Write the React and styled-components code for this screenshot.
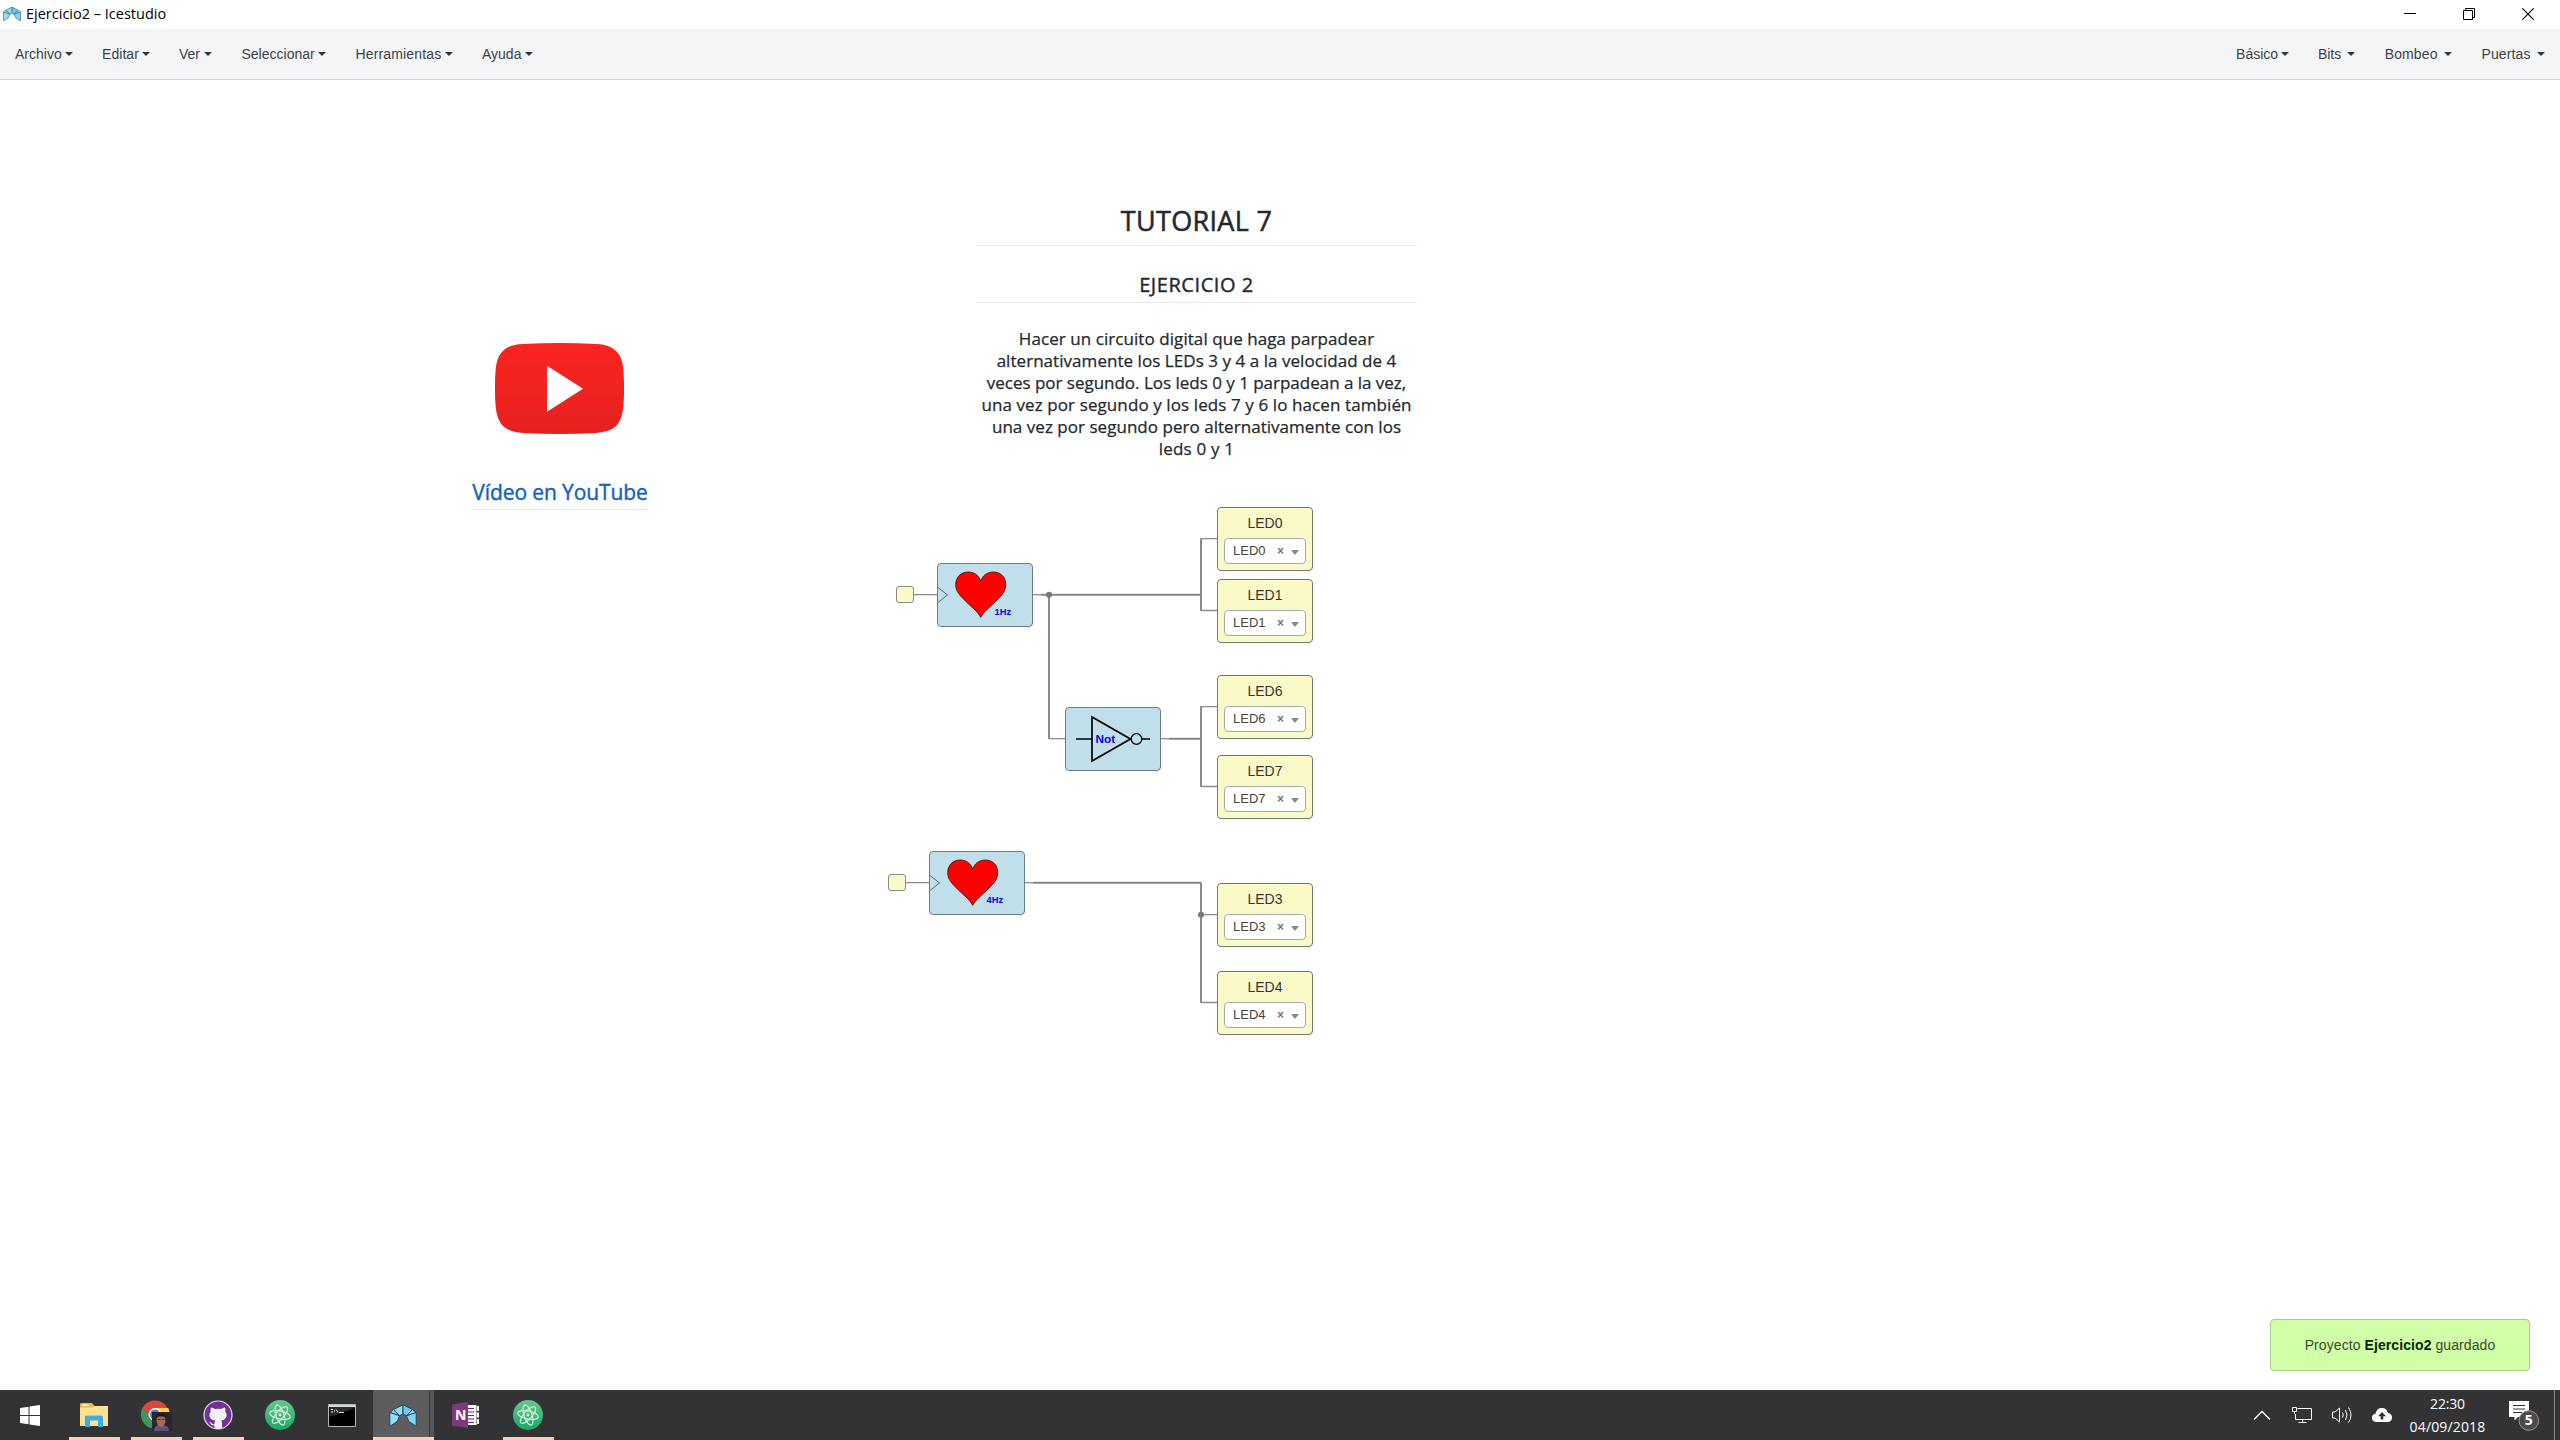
import React from 'react';
import styled, { createGlobalStyle, css } from 'styled-components';

const sans = '"Liberation Sans", Arial, sans-serif';
const humanist = '"Open Sans", "Noto Sans", sans-serif';

const GlobalStyle = createGlobalStyle`
  * { box-sizing: border-box; }
  body { margin: 0; background: #fff; font-family: ${sans}; }
  svg { display: block; }
`;

const Window = styled.div`
  display: flex;
  flex-direction: column;
  width: 2560px;
  height: 1440px;
  overflow: hidden;
  background: #fff;
`;

/* ---------- title bar ---------- */

const TitleBar = styled.header`
  display: flex;
  align-items: center;
  height: 29px;
  padding: 0 26px 1px 3px;
  background: #fff;
`;

const Title = styled.span`
  flex: 1;
  margin-left: 5px;
  font: 400 14.5px/20px ${humanist};
  letter-spacing: 0;
  color: #000;
`;

const WindowButtons = styled.div`
  display: flex;
  gap: 47px;
`;

/* ---------- menu bar ---------- */

const MenuBar = styled.nav`
  display: flex;
  justify-content: space-between;
  align-items: center;
  height: 51px;
  padding: 0 15px 1px 15px;
  background: #f3f5f7;
  border-bottom: 1px solid #d0d3d6;
`;

const MenuGroup = styled.div`
  display: flex;
  gap: ${p => p.$gap}px;
`;

const MenuItem = styled.a`
  display: flex;
  align-items: center;
  justify-content: space-between;
  width: ${p => p.$w}px;
  font-size: 14px;
  line-height: 20px;
  letter-spacing: ${p => p.$ls || 0}px;
  color: #3c4146;
  white-space: nowrap;
`;

const Caret = styled.i`
  flex: none;
  margin-top: 1px;
  border: 4px solid transparent;
  border-bottom-width: 0;
  border-top-color: ${p => p.$color || '#333'};
`;

/* ---------- design canvas ---------- */

const Canvas = styled.main`
  position: relative;
  flex: 1;
  background: #fff;
`;

const Wires = styled.svg`
  position: absolute;
  left: 0;
  top: 0;
`;

const Node = styled.div`
  position: absolute;
  left: ${p => p.$x}px;
  top: ${p => p.$y - 80}px;
`;

const Statement = styled(Node)`
  width: 441px;
  font-family: ${humanist};
  font-weight: 500;
  text-align: center;
  color: #24292e;
  -webkit-text-stroke: 0.25px #24292e;
`;

const heading = css`
  margin: 0;
  font-weight: 500;
  border-bottom: 1px solid #e6e8eb;
  -webkit-text-stroke: 0.55px #24292e;
`;

const H1 = styled.h1`
  ${heading}
  font-size: 27px;
  line-height: 34px;
  letter-spacing: 0.32px;
  padding-bottom: 7px;
`;

const H2 = styled.h2`
  ${heading}
  font-size: 20px;
  line-height: 26px;
  letter-spacing: 0.56px;
  margin-top: 26px;
  padding-bottom: 4px;
  -webkit-text-stroke-width: 0.4px;
`;

const Paragraph = styled.p`
  margin: 25px 0 0;
  font-size: 17px;
  line-height: 22px;
`;

const Line = styled.span`
  display: block;
  white-space: nowrap;
  letter-spacing: ${p => p.$ls}px;
`;

const VideoCard = styled(Node)`
  display: flex;
  flex-direction: column;
  align-items: center;
  width: 176px;
  gap: 44px;

  > svg { margin-right: 2px; }
`;

const VideoLink = styled.a`
  width: 100%;
  padding-bottom: 3px;
  border-bottom: 1px solid #dfe8f3;
  font: 500 21px/28px ${humanist};
  letter-spacing: -0.11px;
  text-align: center;
  white-space: nowrap;
  color: #1560c4;
  -webkit-text-stroke: 0.4px #1560c4;
`;

const Block = styled(Node)`
  width: 96px;
  height: 64px;
  border: 1px solid #6d7c84;
  border-radius: 4px;
  background: #c0dfeb;
`;

const ClockPin = styled(Node)`
  width: 18px;
  height: 17px;
  border: 1px solid #8c8b78;
  border-radius: 3px;
  background: #fafac8;
`;

const Output = styled(Node)`
  display: flex;
  flex-direction: column;
  align-items: center;
  width: 96px;
  height: 64px;
  padding-top: 7px;
  border: 1px solid #77766a;
  border-radius: 4px;
  background: #fafac8;
  font-size: 14px;
  line-height: 16px;
  color: #333;
`;

const Select = styled.div`
  display: flex;
  align-items: center;
  width: 82px;
  height: 26px;
  margin-top: 7px;
  padding: 0 6px 0 8px;
  border: 1px solid #aaa;
  border-radius: 4px;
  background: #fff;
  font-size: 13px;
  line-height: 24px;
  color: #444;
`;

const SelectValue = styled.span`
  flex: 1;
`;

const Clear = styled.span`
  margin-right: 7px;
  font-size: 12px;
  font-weight: 700;
  color: #777;
`;

const SelectCaret = styled(Caret)`
  margin-top: 3px;
  border-top-width: 5px;
`;

const Toast = styled.div`
  position: absolute;
  right: 30px;
  bottom: 19px;
  display: flex;
  align-items: center;
  justify-content: center;
  width: 260px;
  height: 52px;
  border: 1px solid #a8cf88;
  border-radius: 4px;
  background: #d1ffa8;
  font-size: 14px;
  letter-spacing: 0.08px;
  color: #3a4a2e;
  white-space: pre;
`;

const Strong = styled.b`
  color: #0c1f06;
`;

/* ---------- task bar ---------- */

const TaskBar = styled.footer`
  display: flex;
  height: 50px;
  background: #333335;
`;

const Start = styled.div`
  display: flex;
  align-items: center;
  justify-content: center;
  width: 60px;
  margin-right: 3px;
`;

const Task = styled.div`
  display: flex;
  align-items: center;
  justify-content: center;
  width: 51px;
  margin: 0 5.5px;
  border-bottom: 3px solid ${p => (p.$running ? '#fbcfb2' : 'transparent')};
  padding-top: 3px;
  ${p => p.$active && css`
    width: 61px;
    margin: 0 1px 0 0;
    padding-right: 2px;
    background: linear-gradient(90deg, #5d5d5f 56px, #3c3c3e 56px, #3c3c3e 57px, #555557 57px);
  `}
`;

const Tray = styled.div`
  display: flex;
  align-items: center;
  margin-left: auto;
  color: #fff;
`;

const TrayIcon = styled.div`
  width: 40px;
  display: flex;
  justify-content: center;
`;

const Clock = styled.div`
  display: flex;
  flex-direction: column;
  align-items: center;
  width: 91px;
  margin-right: 16px;
  font: 400 14px/23px ${humanist};
  color: #fff;
`;

const Time = styled.span`
  letter-spacing: -0.17px;
`;

const DateText = styled.span`
  letter-spacing: 0.15px;
`;

const ShowDesktop = styled.div`
  width: 6px;
  align-self: stretch;
  margin-left: 14px;
  border-left: 1px solid #88888a;
`;

/* ---------- drawings ---------- */

const IceLogo = ({ w, h, line }) => (
  <svg width={w} height={h} viewBox="0 0 28 23">
    <g stroke={line} strokeWidth="1" strokeLinejoin="round">
      <path d="M14 .8 4.500 5.500 10.500 11.800 14 9.800Z" fill="#8fdcf8" />
      <path d="M14 .8 23.500 5.500 17.500 11.800 14 9.800Z" fill="#6cc9ef" />
      <path d="M4.500 5.500 .8 8.500 10.500 11.800Z" fill="#7ad2f4" />
      <path d="M23.500 5.500 27.200 8.500 17.500 11.800Z" fill="#8fdcf8" />
      <path d="M.8 8.500 10.500 11.800 8.200 17.500 .8 22.300Z" fill="#93dff9" />
      <path d="M27.200 8.500 17.500 11.800 19.800 17.500 27.200 22.300Z" fill="#80d4f5" />
    </g>
  </svg>
);

const YouTube = () => (
  <svg width="129" height="91" viewBox="0 0 129 92" preserveAspectRatio="none">
    <defs>
      <linearGradient id="yt" x1="0" y1="0" x2="0" y2="1">
        <stop offset="0" stopColor="#fb2420" />
        <stop offset="1" stopColor="#e5221f" />
      </linearGradient>
    </defs>
    <path fill="url(#yt)" d="M28 1Q64.500-1 101 1 115 1.500 121 8 127 13 128.300 26 129.800 46 128.300 65 127 78 121 84 115 90 101 91 64.500 93 28 91 14 90 8 84 2 78 .7 65-.8 46 .7 26 2 13 8 8 14 1.500 28 1Z" />
    <path fill="#fff" d="M52 23 88 46.300 52 69.500Z" />
  </svg>
);

const Heart = ({ label }) => (
  <svg width="94" height="62" viewBox="1 1 94 62">
    <path d="M1 24.500 10.500 32 1 39.500" fill="none" stroke="#5d6d76" />
    <path d="M43.700 54.300C40 47.500 33 43 26 35.500 20.500 30 18.700 26.500 18.700 21.500 18.700 14 24 9 31 9 37.500 9 42 12.500 43.700 18.500 45.500 12.500 50 9 56.500 9 63.500 9 68.700 14 68.700 21.500 68.700 26.500 67 30 61.500 35.500 54.500 43 47.500 47.500 43.700 54.300Z" fill="#f00" stroke="#35080a" strokeWidth=".8" />
    <text x="57.500" y="51.500" fontFamily="Liberation Sans, Arial, sans-serif" fontSize="9.300" fontWeight="700" fill="#0a00e6">{label}</text>
  </svg>
);

const NotGate = () => (
  <svg width="94" height="62" viewBox="1 1 94 62">
    <g fill="none" stroke="#000">
      <path d="M11 32H27M77 32H85" strokeWidth="1.300" />
      <path d="M27 10V54L65.500 32Z" strokeWidth="1.700" />
      <circle cx="71.500" cy="32" r="5.300" strokeWidth="1.300" />
    </g>
    <text x="30.500" y="36" fontFamily="Liberation Sans, Arial, sans-serif" fontSize="11.800" fontWeight="700" fill="#0a00e6">Not</text>
  </svg>
);

const WindowsLogo = () => (
  <svg width="20" height="21" viewBox="0 0 20 21" fill="#fff">
    <path d="M0 3 8.500 1.700V10H0ZM9.500 1.500 20 0V10H9.500ZM0 11H8.500V19.300L0 18ZM9.500 11H20V21L9.500 19.500Z" />
  </svg>
);

const Explorer = () => (
  <svg width="28" height="25" viewBox="0 0 28 25">
    <path fill="#e9bb4a" d="M0 1.500Q0 0 1.500 0H12L14.500 3H26.500V22.500H0Z" />
    <path fill="#fff" d="M2.500 1.500H9V3H2.500Z" />
    <path fill="#fde293" d="M0 4.500H12L14.500 3H28V23H0Z" />
    <path fill="#3fabe1" d="M5 14Q5 12.500 6.500 12.500H21.500Q23 12.500 23 14V24H18V17.500H10V24H5Z" />
  </svg>
);

const Chrome = () => (
  <svg width="31" height="31" viewBox="0 0 31 31">
    <circle cx="14" cy="14.500" r="14" fill="#e0453a" />
    <path d="M14 8H27.200A14 14 0 0 1 14 28.500L20 18Z" fill="#fcd04a" />
    <path d="M2 7.500 8.500 18 17 21 13 28.500A14 14 0 0 1 2 7.500Z" fill="#2f9e57" />
    <circle cx="14" cy="14.500" r="6.500" fill="#fff" />
    <circle cx="14" cy="14.500" r="5.100" fill="#4285e8" />
    <path d="M11 12H31V31H11Z" fill="#2d2528" />
    <path d="M13 31Q13 26 17.500 25L23 25Q28 26 28 31Z" fill="#5d5382" />
    <ellipse cx="20" cy="20.500" rx="4.500" ry="6.500" fill="#a36a58" />
    <path d="M15 18Q15 13.500 20 13.500T25 18L23 16.500H17Z" fill="#1f1719" />
    <path d="M16.500 19.500H19.300M20.700 19.500H23.500" stroke="#4c2e2a" />
  </svg>
);

const GitHub = () => (
  <svg width="30" height="30" viewBox="0 0 30 30">
    <circle cx="15" cy="15" r="14" fill="#76309a" stroke="#e6dbed" strokeWidth="1.200" />
    <path fill="#f2f2f2" d="M8 7.500Q10 7.500 12 9 15 8.300 18 9 20 7.500 22 7.500 22.700 9.500 22.200 11.500 24.500 14.500 23 17.500 21.800 20 18 20.500 19 21.500 19 23V28.300Q15 29.500 11.500 28.300V25.500Q8.500 26 7.500 23.500 7 22.500 6 22 8 21.500 9 23.500 10 24.700 11.500 24 11.500 21.500 12.300 20.500 8.200 20 7 17.500 5.500 14.500 7.800 11.500 7.300 9.500 8 7.500Z" />
  </svg>
);

const Atom = () => (
  <svg width="30" height="30" viewBox="0 0 30 30">
    <defs>
      <linearGradient id="atom" x1="0" y1="0" x2="0" y2="1">
        <stop offset="0" stopColor="#6bc58a" />
        <stop offset="1" stopColor="#13ab66" />
      </linearGradient>
    </defs>
    <circle cx="15" cy="15" r="15" fill="url(#atom)" />
    <g fill="none" stroke="#e2f5e9" strokeWidth="1.100">
      <ellipse cx="15" cy="15" rx="10.500" ry="4" transform="rotate(12 15 15)" />
      <ellipse cx="15" cy="15" rx="10.500" ry="4" transform="rotate(72 15 15)" />
      <ellipse cx="15" cy="15" rx="10.500" ry="4" transform="rotate(132 15 15)" />
    </g>
    <circle cx="15" cy="15" r="1.400" fill="#fff" />
  </svg>
);

const Terminal = () => (
  <svg width="28" height="23" viewBox="0 0 28 23">
    <path d="M.5.500H27.500V22.500H.5Z" fill="#000" stroke="#b4b8bb" />
    <path d="M1 1H27V3H1Z" fill="#d5dadd" />
    <path d="M1.500 13 27 4V3H1.500Z" fill="#2b2b2b" />
    <path d="M3 5.500H5M3 8H5M6.500 6V6.800M6.500 7.500V8.300M8 5.500 10 8.500M11 8.500H16" stroke="#ddd" fill="none" />
  </svg>
);

const OneNote = () => (
  <svg width="28" height="26" viewBox="0 0 28 26">
    <path d="M14 3H24.500V23H14Z" fill="#fff" />
    <path d="M25 4H27V9H25ZM25 10.500H27V15.500H25ZM25 17H27V22H25Z" fill="#fff" />
    <path d="M16 6.500H22M16 10H22M16 13.500H22M16 17H22M16 20.500H22" stroke="#5b2c72" strokeWidth="1.200" />
    <path d="M0 2.500 16 0V26L0 23.500Z" fill="#80397b" />
    <text x="3" y="18.300" fontFamily="Open Sans, sans-serif" fontSize="14" fontWeight="700" fill="#fff">N</text>
  </svg>
);

const Minimize = () => (
  <svg width="12" height="12" viewBox="0 0 12 12"><path d="M0 5.500H12" stroke="#000" /></svg>
);
const Restore = () => (
  <svg width="12" height="12" viewBox="0 0 12 12" fill="none" stroke="#000"><path d="M.5 2.500H9.500V11.500H.5ZM2.500 2.500V.5H11.500V9.500H9.500" /></svg>
);
const Close = () => (
  <svg width="12" height="12" viewBox="0 0 12 12"><path d="M.3.3 11.700 11.700M11.700.3.3 11.700" stroke="#000" strokeWidth="1.100" /></svg>
);

const ChevronUp = () => (
  <svg width="18" height="11" viewBox="0 0 18 11" fill="none" stroke="#fff" strokeWidth="1.300"><path d="M1 9.500 9 1.500 17 9.500" /></svg>
);
const Monitor = () => (
  <svg width="20" height="17" viewBox="0 0 20 17" fill="none" stroke="#fff">
    <path d="M5.500 1.500H19.500V12.500H3.500V7M10.500 12.500V15.500M6.500 15.500H14.500" />
    <path d="M.5.500H4.500V4.500H.5ZM2.500 4.500V7" />
  </svg>
);
const Speaker = () => (
  <svg width="21" height="18" viewBox="0 0 21 18" fill="none" stroke="#fff">
    <path d="M.5 6H3L7.500 2V16L3 12H.5Z" />
    <path d="M10.500 6.500Q12 9 10.500 11.500M13.500 4Q16.500 9 13.500 14M16.500 1.500Q21.500 9 16.500 16.500" />
  </svg>
);
const CloudUp = () => (
  <svg width="20" height="14" viewBox="0 0 20 14">
    <path fill="#fff" d="M4 14Q0 13.700 0 9.800 0 6.500 3.500 5.800 4.500 0 10 0 14.700 0 16 5 20 5.500 20 9.500 20 13.600 16 14Z" />
    <path fill="#333335" d="M10 4 14 8.200H11.300V11.500H8.700V8.200H6Z" />
  </svg>
);
const Notifications = () => (
  <svg width="31" height="31" viewBox="0 -1 31 31">
    <path fill="#fff" d="M0 0H20V16H9L5.500 19.500V16H0Z" />
    <path d="M4 4.500H16M4 8H16M4 11.500H13" stroke="#333335" />
    <circle cx="19.800" cy="19.500" r="9.800" fill="#4a4a4c" stroke="#9a9a9c" />
    <text x="19.800" y="24.400" textAnchor="middle" fontFamily="Open Sans, sans-serif" fontSize="14" fontWeight="700" fill="#fff">5</text>
  </svg>
);

/* ---------- data ---------- */

const menus = [
  ['Archivo', 57.5, 0], ['Editar', 47.5, 0.05], ['Ver', 33, 0],
  ['Seleccionar', 84.5, 0], ['Herramientas', 97, 0.15], ['Ayuda', 51, 0],
];
const collections = [['Básico', 52.500, 0], ['Bits', 37.500, 0], ['Bombeo', 67.500, 0.12], ['Puertas', 63.500, 0.12]];
const outputs = [['LED0', 507], ['LED1', 579], ['LED6', 675], ['LED7', 755], ['LED3', 883], ['LED4', 971]];
const statement = [
  ['Hacer un circuito digital que haga parpadear', 0.066],
  ['alternativamente los LEDs 3 y 4 a la velocidad de 4', 0.047],
  ['veces por segundo. Los leds 0 y 1 parpadean a la vez,', -0.018],
  ['una vez por segundo y los leds 7 y 6 lo hacen también', 0.097],
  ['una vez por segundo pero alternativamente con los', 0.034],
  ['leds 0 y 1', 0.2],
];

const Menu = ({ items, gap }) => (
  <MenuGroup $gap={gap}>
    {items.map(([name, w, ls]) => (
      <MenuItem key={name} $w={w} $ls={ls}>{name}<Caret /></MenuItem>
    ))}
  </MenuGroup>
);

export default function App() {
  return (
    <Window>
      <GlobalStyle />
      <TitleBar>
        <IceLogo w={18} h={16} line="#2d6c8c" />
        <Title>Ejercicio2 – Icestudio</Title>
        <WindowButtons><Minimize /><Restore /><Close /></WindowButtons>
      </TitleBar>

      <MenuBar>
        <Menu items={menus} gap={29.500} />
        <Menu items={collections} gap={29.300} />
      </MenuBar>

      <Canvas>
        <Wires width="2560" height="1310" viewBox="0 80 2560 1310" fill="none" stroke="#8a8a8a" strokeWidth="1.300">
          <path d="M913 594.700H937M1033 594.700H1201V538.700H1217M1201 594.700V610.500H1217" />
          <path d="M1049 594.700V738.700H1065M1161 738.700H1201V706.600H1217M1201 738.700V786.500H1217" />
          <path d="M905 882.700H929M1025 882.700H1201V914.700H1217M1201 914.700V1002.500H1217" />
          <path d="M1041 594.700H1201M1169 738.700H1201M1033 882.700H1201M1049 594.700V738.700M1201 538.700V610.500M1201 706.600V786.500M1201 882.700V1002.500" strokeWidth="1.900" />
          <circle cx="1049" cy="594.700" r="3" fill="#777" stroke="none" />
          <circle cx="1201" cy="914.700" r="3" fill="#777" stroke="none" />
        </Wires>

        <Statement $x={976} $y={204}>
          <H1>TUTORIAL 7</H1>
          <H2>EJERCICIO 2</H2>
          <Paragraph>
            {statement.map(([text, ls]) => <Line key={text} $ls={ls}>{text}</Line>)}
          </Paragraph>
        </Statement>

        <VideoCard $x={472} $y={343}>
          <YouTube />
          <VideoLink>Vídeo en YouTube</VideoLink>
        </VideoCard>

        <ClockPin $x={896} $y={586} />
        <Block $x={937} $y={563}><Heart label="1Hz" /></Block>
        <Block $x={1065} $y={707}><NotGate /></Block>
        <ClockPin $x={888} $y={874} />
        <Block $x={929} $y={851}><Heart label="4Hz" /></Block>

        {outputs.map(([name, y]) => (
          <Output key={name} $x={1217} $y={y}>
            {name}
            <Select>
              <SelectValue>{name}</SelectValue>
              <Clear>×</Clear>
              <SelectCaret $color="#888" />
            </Select>
          </Output>
        ))}

        <Toast>Proyecto <Strong>Ejercicio2</Strong> guardado</Toast>
      </Canvas>

      <TaskBar>
        <Start><WindowsLogo /></Start>
        <Task $running><Explorer /></Task>
        <Task $running><Chrome /></Task>
        <Task $running><GitHub /></Task>
        <Task><Atom /></Task>
        <Task><Terminal /></Task>
        <Task $running $active><IceLogo w={28} h={23} line="#26465a" /></Task>
        <Task><OneNote /></Task>
        <Task $running><Atom /></Task>
        <Tray>
          <TrayIcon><ChevronUp /></TrayIcon>
          <TrayIcon><Monitor /></TrayIcon>
          <TrayIcon><Speaker /></TrayIcon>
          <TrayIcon><CloudUp /></TrayIcon>
          <Clock><Time>22:30</Time><DateText>04/09/2018</DateText></Clock>
          <Notifications />
          <ShowDesktop />
        </Tray>
      </TaskBar>
    </Window>
  );
}
